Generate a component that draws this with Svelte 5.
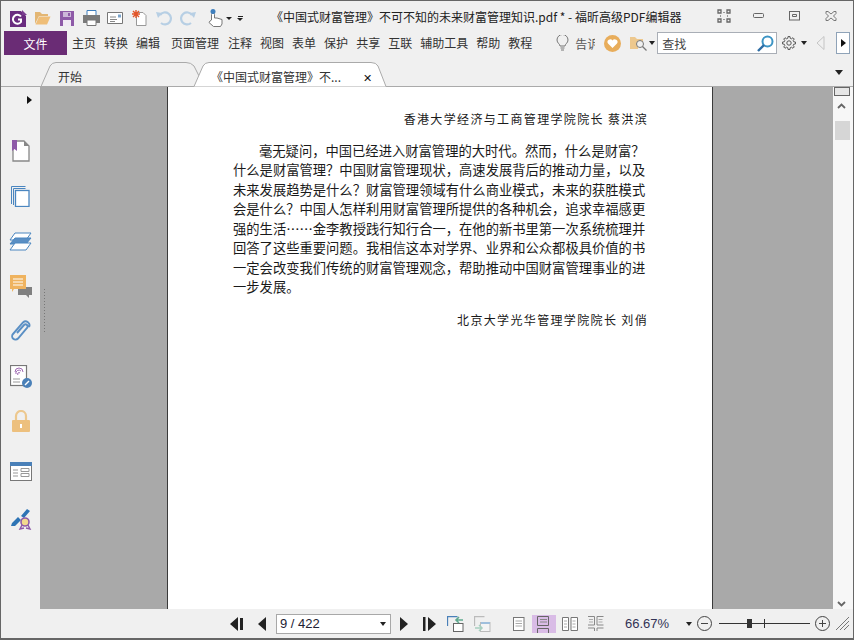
<script>
  const menus = ['主页','转换','编辑','页面管理','注释','视图','表单','保护','共享','互联','辅助工具','帮助','教程'];
  const lines = [
    '什么是财富管理？中国财富管理现状，高速发展背后的推动力量，以及',
    '未来发展趋势是什么？财富管理领域有什么商业模式，未来的获胜模式',
    '会是什么？中国人怎样利用财富管理所提供的各种机会，追求幸福感更',
    '强的生活……金李教授践行知行合一，在他的新书里第一次系统梳理并',
    '回答了这些重要问题。我相信这本对学界、业界和公众都极具价值的书',
    '一定会改变我们传统的财富管理观念，帮助推动中国财富管理事业的进',
    '一步发展。'
  ];
  const gear = (() => {
    let d = '';
    const n = 8, c = 7;
    for (let i = 0; i < n; i++) {
      const a = (i / n) * Math.PI * 2;
      const st = Math.PI / n;
      const pts = [[4.9, a - st * 0.62], [6.6, a - st * 0.36], [6.6, a + st * 0.36], [4.9, a + st * 0.62]];
      for (const [r, t] of pts) {
        d += (d ? 'L' : 'M') + (c + r * Math.cos(t)).toFixed(2) + ' ' + (c + r * Math.sin(t)).toFixed(2);
      }
    }
    return d + 'z';
  })();
</script>

<div class="win">
  <header class="titlebar">
    <div class="qa">
      <span class="slot"><svg width="17" height="17" viewBox="0 0 17 17"><path d="M0 1h11l5 5v11H0z" fill="#6a2c7f"/><path d="M12 0l5 5h-5z" fill="#7b3d90"/><path d="M11 6.500A4.500 4.500 0 1 0 11 12V9.500H8" fill="none" stroke="#fff" stroke-width="2"/></svg></span>
      <span class="slot"><svg width="17" height="14" viewBox="0 0 17 14"><path d="M1 13V1h5l2 2h6v2H5L1 13z" fill="#e3b673"/><path d="M1.500 13.500L5 5.500h11.500l-3.500 8z" fill="#efbe78"/></svg></span>
      <span class="slot"><svg width="14" height="15" viewBox="0 0 14 15"><path d="M0 0h14v15H0z" fill="#8e5aa8"/><path d="M3 1h8v5H3z" fill="#cdb7da"/><path d="M8 2h2v3H8z" fill="#8e5aa8"/><path d="M3 9h8v6H3z" fill="#f1eaf4"/></svg></span>
      <span class="slot"><svg width="17" height="16" viewBox="0 0 17 16"><path d="M4 .5h9v5H4z" fill="#fff" stroke="#3f7fbd"/><path d="M0 5h17v8H0z" fill="#7a7a7a"/><path d="M4 10h9v5.500H4z" fill="#fff" stroke="#777"/></svg></span>
      <span class="slot"><svg width="16" height="13" viewBox="0 0 16 13"><path d="M.5.500h15v11H.5z" fill="#fff" stroke="#777"/><path d="M3 5h6M3 7.500h7M3 9.500h5" stroke="#888"/><path d="M11 2.500h3v3h-3z" fill="#7aa4cc"/></svg></span>
      <span class="slot"><svg width="15" height="16" viewBox="0 0 15 16"><path d="M4.500 2.500h6.500l3 3v10H4.500z" fill="#fff" stroke="#999"/><path d="M4 0v8M0 4h8M1 1l6 6M7 1L1 7" stroke="#e2562a" stroke-width="1.400"/></svg></span>
      <span class="slot"><svg width="16" height="15" viewBox="0 0 16 15"><path d="M4 4a6 6 0 1 1 1 8" fill="none" stroke="#b7cfe4" stroke-width="2.200"/><path d="M0 1l6 1-4 5z" fill="#b7cfe4"/></svg></span>
      <span class="slot"><svg width="16" height="15" viewBox="0 0 16 15"><path d="M12 4a6 6 0 1 0-1 8" fill="none" stroke="#b7cfe4" stroke-width="2.200"/><path d="M16 1l-6 1 4 5z" fill="#b7cfe4"/></svg></span>
      <span class="hand"><svg width="16" height="18" viewBox="0 0 16 18"><path d="M3.500 11V5.500a1.500 1.500 0 0 1 3 0V9h2.500l5 1.500V15l-1.500 2.500h-7L1 13.500l1-1.500z" fill="#fff" stroke="#777"/><circle cx="5" cy="2.500" r="2.500" fill="#3f7fbd"/></svg><i class="tri-d small"></i></span>
      <span class="more"><i class="dash"></i><i class="tri-d small"></i></span>
    </div>
    <div class="title">《中国式财富管理》不可不知的未来财富管理知识.pdf * - 福昕高级PDF编辑器</div>
    <div class="winbtns">
      <svg width="14" height="14" viewBox="0 0 14 14"><path d="M1 1h3v3H1zM10 1h3v3h-3zM1 10h3v3H1zM10 10h3v3h-3z" fill="none" stroke="#666" stroke-width="1.300"/><path d="M6 3.500h2M6 10.500h2M3.500 6v2M10.500 6v2" stroke="#999"/></svg>
      <svg width="12" height="6" viewBox="0 0 12 6"><rect x=".5" y=".5" width="10" height="4" rx="1" fill="none" stroke="#666"/></svg>
      <svg width="12" height="10" viewBox="0 0 12 10"><rect x=".5" y=".5" width="10" height="8.500" fill="none" stroke="#666"/><path d="M3.500 3.500h4v2h-4z" fill="none" stroke="#666"/></svg>
      <svg width="12" height="10" viewBox="0 0 12 10"><path d="M1 .5h2l3 2.500 3-2.500h2v2L8.500 5 11 7.500v2H9L6 7 3 9.500H1v-2L3.500 5 1 2.500z" fill="none" stroke="#777"/></svg>
    </div>
  </header>

  <nav class="menubar">
    <button class="file">文件</button>
    <div class="menus">{#each menus as m}<span>{m}</span>{/each}</div>
    <div class="tools">
      <svg class="bulb" width="13" height="16" viewBox="0 0 13 16"><path d="M4 11c0-2-3-3-3-6a5.500 5.500 0 0 1 11 0c0 3-3 4-3 6z" fill="none" stroke="#777"/><path d="M4.500 13h4M5 15h3" stroke="#777"/></svg>
      <span class="tell">告诉</span>
      <svg class="heart" width="17" height="17" viewBox="0 0 17 17"><circle cx="8.500" cy="8.500" r="8.500" fill="#e8ad5b"/><path d="M8.500 13L4 8.500a2.500 2.500 0 0 1 4.500-3 2.500 2.500 0 0 1 4.500 3z" fill="#fff"/></svg>
      <svg class="fsearch" width="17" height="15" viewBox="0 0 17 15"><path d="M0 13V1h5l2 2h6v8H8v2z" fill="#edc88e"/><circle cx="10" cy="8" r="3.500" fill="#f0f0f0" stroke="#777"/><path d="M12.500 10.500l4 4" stroke="#777" stroke-width="1.300"/></svg>
      <i class="tri-d t1"></i>
      <div class="search"><span>查找</span><svg width="17" height="17" viewBox="0 0 17 17"><circle cx="10.500" cy="6.500" r="5" fill="#fff" stroke="#3c94c4" stroke-width="2"/><path d="M7 10l-6 6" stroke="#2e6da4" stroke-width="2.400"/></svg></div>
      <svg class="gear" width="14" height="14" viewBox="0 0 14 14"><path d={gear} fill="none" stroke="#555"/><circle cx="7" cy="7" r="2.200" fill="none" stroke="#555"/></svg>
      <i class="tri-d t2"></i>
      <svg class="back" width="9" height="14" viewBox="0 0 9 14"><path d="M8 .500v13L1 7z" fill="none" stroke="#c4c4c4"/></svg>
      <button class="nextbtn"><i class="tri-r"></i></button>
    </div>
  </nav>

  <div class="tabs">
    <svg class="tabshape" width="346" height="25" viewBox="0 0 346 25">
      <path d="M0 24.500L9 4Q11 .500 15 .500H145Q150 .500 153 4L158 14" fill="none" stroke="#aaa"/>
      <path d="M153 24.500L162 4Q164 .500 168 .500H330Q335 .500 337 4L345 24.500" fill="#fff" stroke="#aaa"/>
    </svg>
    <span class="tab t-start">开始</span>
    <span class="tab t-doc">《中国式财富管理》不...</span>
    <span class="tab-x">✕</span>
    <i class="tri-d tab-more"></i>
  </div>

  <div class="body">
    <aside class="side">
      <i class="tri-r side-toggle"></i>
      <div class="side-icons">
        <svg width="18" height="22" viewBox="0 0 18 22"><path d="M1 1h11l5 5v15H1z" fill="#fff" stroke="#888" stroke-width="1.300"/><path d="M12 1l5 5h-5z" fill="#888"/><path d="M0 0h5v11l-2.500-2L0 11z" fill="#8e5aa8"/></svg>
        <svg width="19" height="21" viewBox="0 0 19 21"><path d="M.5 18V.500h14M2.500 19V2.500h12" fill="none" stroke="#4a86c0"/><rect x="4.500" y="4.500" width="13.500" height="16" fill="#fff" stroke="#4a86c0" stroke-width="1.300"/></svg>
        <svg width="23" height="19" viewBox="0 0 23 19"><path d="M6 1h16l-5 7H1z" fill="#fff" stroke="#4a86c0"/><path d="M6 6h16l-5 6H1z" fill="#5a8fc4" stroke="#4a86c0"/><path d="M6 11h16l-5 7H1z" fill="#fff" stroke="#4a86c0"/></svg>
        <svg width="22" height="23" viewBox="0 0 22 23"><path d="M8 12h14v8h-3v3l-3-3H8z" fill="#808080"/><path d="M0 0h16v14H4l-2 3v-3H0z" fill="#efb35f"/><path d="M3 4h10M3 7h10M3 10h10" stroke="#fff"/></svg>
        <svg width="20" height="22" viewBox="0 0 20 22"><path d="M6 13l7-8a2 2 0 0 1 3 3l-9 10.500a3.300 3.300 0 0 1-5-4.500L12 2.500a3.800 3.800 0 0 1 6 4.500" fill="none" stroke="#5a8fc4" stroke-width="1.900"/></svg>
        <svg width="22" height="23" viewBox="0 0 22 23"><rect x=".5" y=".5" width="16" height="20" fill="#fff" stroke="#777" stroke-width="1.200"/><path d="M5 7a4 4 0 0 1 8 0M6 9a3 3 0 0 1 5-3M8 10a1 1 0 0 1 2-2" fill="none" stroke="#a06ab4"/><path d="M3 14h7M3 17h7" stroke="#999"/><circle cx="17" cy="18" r="5" fill="#4a80b8"/><path d="M15 20l4-4" stroke="#fff" stroke-width="1.400"/></svg>
        <svg width="18" height="22" viewBox="0 0 18 22"><path d="M4 10V6a5 5 0 0 1 10 0v4" fill="none" stroke="#edc88e" stroke-width="2.200"/><rect y="10" width="18" height="12" rx="1" fill="#edc07e"/><path d="M8 14h2v4H8z" fill="#fff"/></svg>
        <svg width="22" height="19" viewBox="0 0 22 19"><rect x=".5" y=".5" width="21" height="18" fill="#fff" stroke="#777"/><path d="M0 0h22v4H0z" fill="#4a80b8"/><path d="M3 8h5M3 11h5M3 14h5" stroke="#999"/><path d="M11 6.500h8v3h-8zM11 11.500h8v3h-8z" fill="none" stroke="#999"/></svg>
        <svg width="22" height="23" viewBox="0 0 22 23"><path d="M1 19l1-3 6-6 3 3-6 6zM11 9l6-7 3 2-6 7z" fill="#2e74b5"/><circle cx="15" cy="15" r="4" fill="#f2d98e" stroke="#8e5aa8" stroke-width="1.600"/><path d="M12 18l-2 4 4-1M18 18l2 4-4-1" fill="none" stroke="#8e5aa8" stroke-width="1.400"/></svg>
      </div>
    </aside>
    <main class="canvas">
      <i class="grip"></i>
      <article class="page">
        <p class="sign first">香港大学经济与工商管理学院院长 蔡洪滨</p>
        <div class="para">
          <p class="indent">毫无疑问，中国已经进入财富管理的大时代。然而，什么是财富？</p>
          {#each lines as l}<p>{l}</p>{/each}
        </div>
        <p class="sign second">北京大学光华管理学院院长 刘俏</p>
      </article>
    </main>
    <div class="scroll">
      <span class="split"></span>
      <svg class="chev up" width="9" height="6" viewBox="0 0 9 6"><path d="M1 5l3.500-3.500L8 5" fill="none" stroke="#666" stroke-width="1.800"/></svg>
      <span class="thumb"></span>
      <svg class="chev dn" width="9" height="6" viewBox="0 0 9 6"><path d="M1 1l3.500 3.500L8 1" fill="none" stroke="#666" stroke-width="1.800"/></svg>
    </div>
  </div>

  <footer class="status">
    <svg class="s-first" width="14" height="14" viewBox="0 0 14 14"><path d="M8 0v14L0 7zM10 1h3v12h-3z" fill="#222"/></svg>
    <svg class="s-prev" width="8" height="14" viewBox="0 0 8 14"><path d="M8 0v14L0 7z" fill="#222"/></svg>
    <div class="pagebox"><span>9 / 422</span><i class="tri-d"></i></div>
    <svg class="s-next" width="8" height="14" viewBox="0 0 8 14"><path d="M0 0v14l8-7z" fill="#222"/></svg>
    <svg class="s-last" width="13" height="14" viewBox="0 0 13 14"><path d="M0 0h2.500v14H0zM5 0v14l8-7z" fill="#222"/></svg>
    <svg class="s-vb" width="17" height="16" viewBox="0 0 17 16"><path d="M.5 10V.5h10" fill="none" stroke="#4a80b8" stroke-width="1.300"/><rect x="6.500" y="7.500" width="9.500" height="8" fill="#fff" stroke="#666"/><path d="M9 4h7M12 1L9 4l3 3" fill="none" stroke="#5fa98f" stroke-width="1.600"/></svg>
    <svg class="s-vf" width="17" height="16" viewBox="0 0 17 16"><path d="M.5 10V.500h10" fill="none" stroke="#bbb" stroke-width="1.300"/><rect x="6.500" y="6.500" width="9.500" height="9" fill="#f4f4f4" stroke="#bbb"/><path d="M7 7h9" stroke="#9fbfdc" stroke-width="2"/><path d="M1 12h7M5 9l3 3-3 3" fill="none" stroke="#a8cfc0" stroke-width="1.500"/></svg>
    <svg class="s-v1" width="12" height="14" viewBox="0 0 12 14"><rect x=".5" y=".5" width="10.500" height="13" fill="#fff" stroke="#777"/><path d="M2.500 4h6.500M2.500 6.500h6.500M2.500 9h6.500" stroke="#aaa"/></svg>
    <span class="v-active"><svg width="14" height="17" viewBox="0 0 14 17"><path d="M.5.500h11v9h-11zM.5 12.500h11V17M.5 12.500V17" fill="none" stroke="#666"/><path d="M3 3.500h7M3 6h7" stroke="#888"/></svg></span>
    <svg class="s-v3" width="16" height="14" viewBox="0 0 16 14"><path d="M.5.500h6v13h-6zM9 .5h6.500v13H9z" fill="#fff" stroke="#777"/><path d="M2 4h3M2 7h3M2 10h3M10.500 4h3M10.500 7h3M10.500 10h3" stroke="#aaa"/></svg>
    <svg class="s-v4" width="16" height="15" viewBox="0 0 16 15"><path d="M0 .500h6.500V9H0M15.500 .500H9V9h6.500M0 12h6.500v3M15.500 12H9v3" fill="none" stroke="#888"/><path d="M1 3.500h4M1 6h4M10.500 3.500h4M10.500 6h4" stroke="#aaa"/></svg>
    <span class="zoomval">66.67%</span>
    <i class="tri-d z-tri"></i>
    <svg class="z-minus" width="15" height="15" viewBox="0 0 15 15"><circle cx="7.500" cy="7.500" r="7" fill="none" stroke="#444"/><path d="M4 7.500h7" stroke="#444"/></svg>
    <div class="slider"><i class="knob"></i><i class="tick"></i></div>
    <svg class="z-plus" width="15" height="15" viewBox="0 0 15 15"><circle cx="7.500" cy="7.500" r="7" fill="none" stroke="#444"/><path d="M4 7.500h7M7.500 4v7" stroke="#444"/></svg>
    <svg class="resize" width="13" height="13" viewBox="0 0 13 13"><path d="M0 13L13 0M4 13l9-9M8 13l5-5" stroke="#777"/></svg>
  </footer>
</div>

<style>
  :global(body) { margin: 0; }
  .win {
    width: 854px; height: 640px; box-sizing: border-box; overflow: hidden;
    background: #f0f0f0; border: 1px solid #666; border-bottom-width: 2px;
    display: flex; flex-direction: column; position: relative;
    font-family: "Noto Sans CJK SC", "Liberation Sans", sans-serif; font-size: 12px; color: #333;
  }
  i { display: block; font-style: normal; }
  svg { display: block; flex: none; }
  .tri-d { width: 0; height: 0; border: 3px solid transparent; border-top: 4px solid #222; border-bottom: 0; }
  .tri-r { width: 0; height: 0; border: 4px solid transparent; border-left: 5px solid #111; border-right: 0; }

  .titlebar { height: 30px; display: flex; align-items: center; flex: none; position: relative; }
  .qa { display: flex; align-items: center; padding-left: 5px; height: 100%; padding-top: 4px; box-sizing: border-box; }
  .slot { width: 24.300px; display: flex; justify-content: center; align-items: center; flex: none; }
  .hand { display: flex; align-items: center; gap: 2px; margin-left: 8px; flex: none; }
  .small { border-width: 3px; border-top-width: 3px; border-bottom-width: 0; }
  .more { display: flex; flex-direction: column; gap: 1px; margin-left: 5px; align-items: center; }
  .dash { width: 5px; height: 1px; background: #222; }
  .title { position: absolute; left: 270px; top: 6px; font-size: 12px; line-height: 20px; color: #222; white-space: nowrap; }
  .winbtns { position: absolute; left: 716px; top: 7px; display: grid; grid-template-columns: repeat(4, 36px); align-items: center; height: 15px; }

  .menubar { height: 24px; display: flex; align-items: center; flex: none; padding-left: 3px; }
  .file { width: 63px; height: 24px; flex: none; border: 0; padding: 0; background: #6a2c75; color: #fff; font: inherit; font-size: 12px; }
  .menus { display: flex; gap: 8px; margin-left: 5px; line-height: 24px; flex: none; white-space: nowrap; }
  .menus span { color: #333; flex: none; }
  .menus span:nth-child(4) { margin: 0 1px 0 3px; }
  .tools { display: flex; align-items: center; margin-left: 24px; flex: none; }
  .tell { width: 20px; overflow: hidden; white-space: nowrap; margin-left: 6px; color: #555; }
  .heart { margin-left: 9px; }
  .fsearch { margin-left: 9px; }
  .t1 { margin-left: 2px; }
  .search { margin-left: 2px; width: 120px; height: 22px; box-sizing: border-box; border: 1px solid #a9aeb6; background: #fff; display: flex; align-items: center; justify-content: space-between; padding: 0 2px 0 4px; color: #444; }
  .gear { margin-left: 5px; }
  .t2 { margin-left: 5px; }
  .back { margin-left: 9px; }
  .nextbtn { margin-left: 11px; width: 14px; height: 22px; box-sizing: border-box; padding: 0; background: #fff; border: 1px solid #8fa3b8; display: flex; align-items: center; justify-content: center; }

  .tabs { height: 32px; flex: none; position: relative; }
  .tabs::after { content: ""; position: absolute; left: 0; right: 0; bottom: 0; height: 1px; background: #aaa; }
  .tabshape { position: absolute; left: 40px; top: 7px; z-index: 1; }
  .tab { position: absolute; top: 13px; line-height: 18px; white-space: nowrap; color: #333; z-index: 2; }
  .t-start { left: 57px; }
  .t-doc { left: 210px; }
  .tab-x { position: absolute; left: 362px; top: 14px; font-size: 11px; line-height: 16px; color: #111; z-index: 2; }
  .tab-more { position: absolute; left: 834px; top: 15px; border-width: 4px; border-top-width: 5px; border-bottom-width: 0; }

  .body { flex: 1; display: flex; min-height: 0; }
  .side { width: 39px; flex: none; position: relative; background: #f0f0f0; }
  .side-toggle { position: absolute; left: 26px; top: 9px; }
  .side-icons { padding-top: 53px; display: flex; flex-direction: column; align-items: center; }
  .side-icons svg:nth-child(2) { margin-top: 24px; }
  .side-icons svg:nth-child(3) { margin-top: 25px; }
  .side-icons svg:nth-child(4) { margin-top: 24px; }
  .side-icons svg:nth-child(5) { margin-top: 22px; }
  .side-icons svg:nth-child(6) { margin-top: 23px; }
  .side-icons svg:nth-child(7) { margin-top: 22px; }
  .side-icons svg:nth-child(8) { margin-top: 30px; }
  .side-icons svg:nth-child(9) { margin-top: 26px; }

  .canvas { flex: 1; background: #a9a9a9; display: flex; justify-content: center; position: relative; min-width: 0; }
  .grip { position: absolute; left: 3px; top: 201px; width: 4px; height: 44px; background-image: radial-gradient(#777 0.8px, transparent 1px); background-size: 3px 3px; }
  .page { width: 544px; box-sizing: content-box; background: #fff; border: solid #3a3a3a; border-width: 0 1px; margin-left: 7px; color: #1a1a1a; font-family: "Noto Sans CJK SC", serif; white-space: nowrap; }
  .page p { margin: 0; }
  .sign { text-align: right; font-size: 12px; letter-spacing: 1.350px; line-height: 16px; padding-right: 64px; }
  .first { margin-top: 24px !important; }
  .para { margin: 14px 0 0 65px; font-size: 13.300px; line-height: 19.450px; }
  .indent { padding-left: 26px; }
  .second { margin-top: 15px !important; }

  .scroll { width: 20px; flex: none; background: #f7f7f7; position: relative; display: flex; flex-direction: column; align-items: center; }
  .split { width: 16px; height: 9px; box-sizing: border-box; border: 1px solid #666; background: #e6e6e6; margin: 0 3px 0 0; }
  .up { margin: 7px 3px 0 0; }
  .thumb { width: 15px; height: 19px; background: #d6d6d6; margin: 12px 2px 0 0; }
  .dn { margin: auto 3px 2px 0; }

  .status { height: 29px; flex: none; display: flex; align-items: center; background: #f0f0f0; }
  .s-first { margin-left: 229px; }
  .s-prev { margin-left: 14px; }
  .pagebox { margin-left: 10px; width: 115px; height: 20px; box-sizing: border-box; border: 1px solid #a8a8a8; background: #fff; display: flex; align-items: center; justify-content: space-between; padding: 0 4px 0 3px; font-size: 13px; color: #223; font-family: "Liberation Sans", sans-serif; }
  .s-next { margin-left: 9px; }
  .s-last { margin-left: 15px; }
  .s-vb { margin-left: 11px; }
  .s-vf { margin-left: 10px; }
  .s-v1 { margin-left: 22px; }
  .v-active { margin-left: 7px; width: 24px; height: 18px; background: #d9bce6; display: flex; justify-content: center; overflow: hidden; padding-top: 1px; box-sizing: border-box; }
  .s-v3 { margin-left: 6px; }
  .s-v4 { margin-left: 10px; }
  .zoomval { margin-left: 21px; width: 45px; font-size: 13px; color: #335; font-family: "Liberation Sans", sans-serif; }
  .z-tri { margin-left: 16px; }
  .z-minus { margin-left: 5px; }
  .slider { margin-left: 7px; width: 91px; height: 1px; background: #333; position: relative; }
  .knob { position: absolute; left: 28px; top: -4px; width: 5px; height: 9px; background: #333; }
  .tick { position: absolute; left: 45px; top: -4px; width: 1px; height: 9px; background: #333; }
  .z-plus { margin-left: 5px; }
  .resize { margin-left: 6px; }
</style>
